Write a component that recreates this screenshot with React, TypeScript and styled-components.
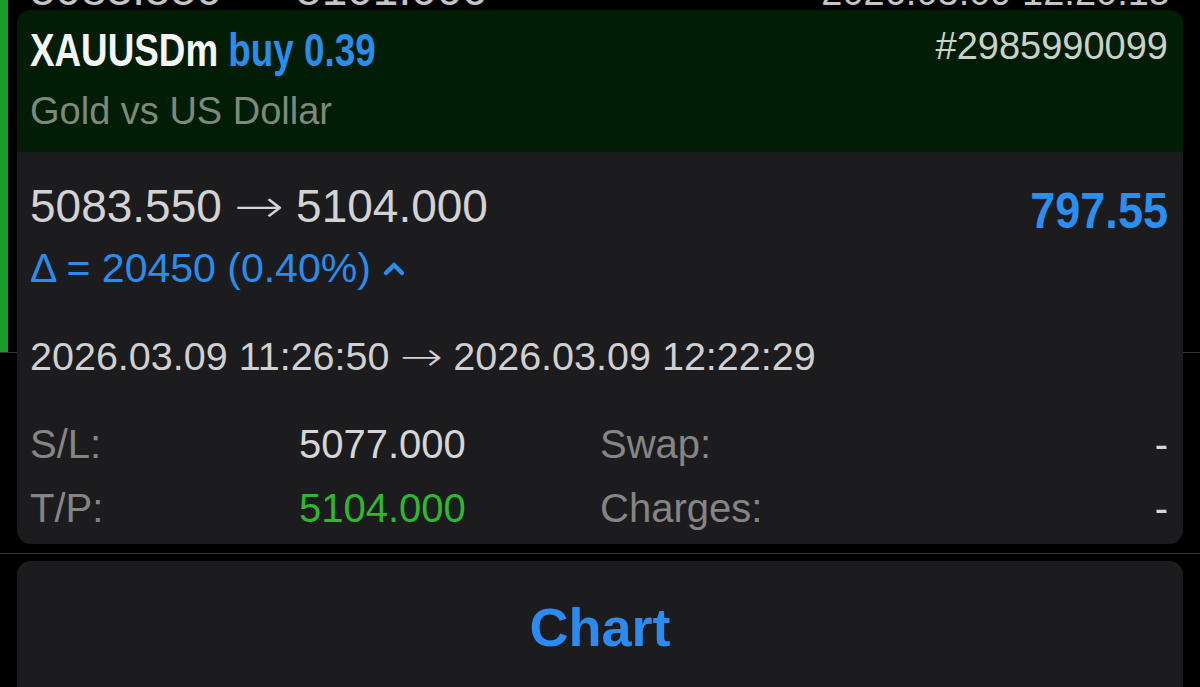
import React from "react";
import styled, { createGlobalStyle } from "styled-components";

const GlobalStyle = createGlobalStyle`
    html, body {
        margin: 0;
        padding: 0;
        background: #000;
        overflow: hidden;
    }
    body {
        font-family: "Liberation Sans", Arial, sans-serif;
    }
`;

const Screen = styled.div`
    position: relative;
    width: 1200px;
    height: 687px;
    background: #000;
    overflow: hidden;
`;

/* list of trades lying behind the sheet */
const ListRow = styled.div<{ $height: number }>`
    display: flex;
    height: ${p => p.$height}px;
    border-bottom: 1px solid #333336;
    overflow: hidden;
`;

const SideMark = styled.div<{ $active?: boolean }>`
    width: 8px;
    flex-shrink: 0;
    background: ${p => (p.$active ? "#1a9a2b" : "transparent")};
`;

const ListContent = styled.div`
    flex: 1;
    padding: 0 30px 0 22px;
`;

const ListLine = styled.div`
    display: flex;
    justify-content: space-between;
    align-items: baseline;
    margin-top: -38px;
    color: #c4c4c4;
`;

const ListPrice = styled.span`
    font-size: 46px;
    line-height: 1.2;
`;

const ListTime = styled.span`
    font-size: 38px;
    line-height: 1.2;
`;

const Arrow = styled.span`
    display: inline-block;
    font-family: "DejaVu Sans", sans-serif;
    font-weight: 200;
    margin: 0 0.11em;
    transform: scaleX(1.3);
`;

/* sheet on top */
const Sheet = styled.div`
    position: absolute;
    top: 10px;
    left: 17px;
    right: 17px;
    display: flex;
    flex-direction: column;
    gap: 17px;
`;

const Card = styled.div`
    border-radius: 14px;
    overflow: hidden;
    background: #1c1c1e;
`;

const Header = styled.div`
    background: #021d05;
    padding: 13px 15px 17px 13px;
`;

const HeaderTop = styled.div`
    display: flex;
    justify-content: space-between;
    align-items: center;
`;

const Title = styled.div`
    display: inline-block;
    font-size: 46px;
    line-height: 55px;
    font-weight: 700;
    white-space: nowrap;
    transform: scaleX(0.8);
    transform-origin: left center;
`;

const Symbol = styled.span`
    color: #f5f5f5;
`;

const Side = styled.span`
    color: #2a8cec;
`;

const Ticket = styled.span`
    font-size: 38px;
    color: #c9d2c8;
    margin-top: -8px;
`;

const Subtitle = styled.div`
    margin-top: 11px;
    font-size: 38px;
    line-height: 1.2;
    color: #7c8a7b;
`;

const Body = styled.div`
    padding: 22px 15px 4px 13px;
`;

const PriceRow = styled.div`
    display: flex;
    justify-content: space-between;
    align-items: center;
`;

const Prices = styled.div`
    font-size: 46px;
    line-height: 55px;
    color: #d3d3d3;
`;

const Profit = styled.div`
    font-size: 50px;
    line-height: 55px;
    font-weight: 700;
    color: #2a8ff0;
    transform: scaleX(0.9);
    transform-origin: right center;
    margin-top: 10px;
`;

const Delta = styled.div`
    display: flex;
    align-items: center;
    gap: 11px;
    margin-top: 6px;
    font-size: 41px;
    line-height: 47px;
    color: #2a8cec;
`;

const Chevron = styled.svg`
    width: 24px;
    height: 16px;
    margin-top: 2px;
`;

const Times = styled.div`
    margin-top: 41px;
    font-size: 39.5px;
    line-height: 47px;
    color: #d0d0d0;
`;

const Details = styled.div`
    margin-top: 32px;
    display: grid;
    grid-template-columns: 269px 301px 1fr auto;
    font-size: 40px;
    line-height: 64px;
`;

const Label = styled.div`
    color: #858585;
`;

const Value = styled.div<{ $tone?: "green" | "plain"; $right?: boolean }>`
    color: ${p => (p.$tone === "green" ? "#2eb72f" : "#d6d6d6")};
    text-align: ${p => (p.$right ? "right" : "left")};
`;

const ChartButton = styled.button`
    height: 140px;
    border: none;
    border-radius: 14px;
    background: #1c1c1e;
    color: #2a8cf0;
    font-family: "Liberation Sans", Arial, sans-serif;
    font-size: 54px;
    font-weight: 700;
    cursor: pointer;
    padding: 0 0 8px;
`;

const details = [
    { label: "S/L:", value: "5077.000", tone: "plain" as const, label2: "Swap:", value2: "-" },
    { label: "T/P:", value: "5104.000", tone: "green" as const, label2: "Charges:", value2: "-" },
];

export default function App() {
    return (
        <Screen>
            <GlobalStyle />
            <ListRow $height={352}>
                <SideMark $active />
                <ListContent>
                    <ListLine>
                        <ListPrice>5083.550 <Arrow>→</Arrow> 5101.000</ListPrice>
                        <ListTime>2026.03.09 12:20:15</ListTime>
                    </ListLine>
                </ListContent>
            </ListRow>
            <ListRow $height={200}>
                <SideMark />
            </ListRow>

            <Sheet>
                <Card>
                    <Header>
                        <HeaderTop>
                            <Title>
                                <Symbol>XAUUSDm</Symbol> <Side>buy 0.39</Side>
                            </Title>
                            <Ticket>#2985990099</Ticket>
                        </HeaderTop>
                        <Subtitle>Gold vs US Dollar</Subtitle>
                    </Header>
                    <Body>
                        <PriceRow>
                            <Prices>5083.550 <Arrow>→</Arrow> 5104.000</Prices>
                            <Profit>797.55</Profit>
                        </PriceRow>
                        <Delta>
                            <span>Δ = 20450 (0.40%)</span>
                            <Chevron viewBox="0 0 24 16">
                                <polyline points="4,12 12,4 20,12" fill="none" stroke="#2a8cec" strokeWidth="4.5" strokeLinecap="round" strokeLinejoin="round" />
                            </Chevron>
                        </Delta>
                        <Times>2026.03.09 11:26:50 <Arrow>→</Arrow> 2026.03.09 12:22:29</Times>
                        <Details>
                            {details.map(d => (
                                <React.Fragment key={d.label}>
                                    <Label>{d.label}</Label>
                                    <Value $tone={d.tone}>{d.value}</Value>
                                    <Label>{d.label2}</Label>
                                    <Value $right>{d.value2}</Value>
                                </React.Fragment>
                            ))}
                        </Details>
                    </Body>
                </Card>
                <ChartButton>Chart</ChartButton>
            </Sheet>
        </Screen>
    );
}
